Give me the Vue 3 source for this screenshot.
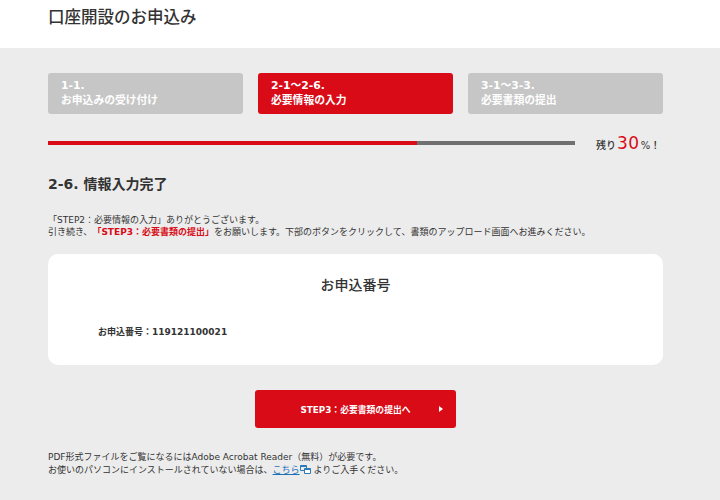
<script setup>
const steps = [
  { no: '1-1.', label: 'お申込みの受け付け', active: false },
  { no: '2-1～2-6.', label: '必要情報の入力', active: true },
  { no: '3-1～3-3.', label: '必要書類の提出', active: false },
]
</script>

<template>
  <div class="page">
    <header class="head">
      <h1>口座開設のお申込み</h1>
    </header>
    <main class="main">
      <ul class="steps">
        <li v-for="s in steps" :key="s.no" class="step" :class="{ active: s.active }">
          <span>{{ s.no }}</span>
          <span>{{ s.label }}</span>
        </li>
      </ul>
      <div class="progress">
        <div class="track"><div class="fill"></div></div>
        <p class="remain">残り<b>30</b>%！</p>
      </div>
      <h2>2-6. 情報入力完了</h2>
      <p class="lead">
        「STEP2：必要情報の入力」ありがとうございます。<br />
        引き続き、<strong>「STEP3：必要書類の提出」</strong>をお願いします。下部のボタンをクリックして、書類のアップロード画面へお進みください。
      </p>
      <section class="card">
        <h3>お申込番号</h3>
        <p class="num">お申込番号：119121100021</p>
      </section>
      <a class="btn">
        <span>STEP3：必要書類の提出へ</span>
        <i class="arrow"></i>
      </a>
      <p class="foot">
        PDF形式ファイルをご覧になるにはAdobe Acrobat Reader（無料）が必要です。<br />
        お使いのパソコンにインストールされていない場合は、<a class="link">こちら</a>
        <svg class="ext" width="11" height="9" viewBox="0 0 11 9">
          <path d="M0.5 0.5h6v5h-6z" fill="none" stroke="#2a7ab8" />
          <path d="M0.5 0.5h6v1.5h-6z" fill="#2a7ab8" />
          <path d="M4.5 3.5h6v5h-6z" fill="#fff" stroke="#2a7ab8" />
          <path d="M4.5 3.5h6v1.5h-6z" fill="#2a7ab8" />
        </svg>
        よりご入手ください。
      </p>
    </main>
  </div>
</template>

<style scoped>
.page {
  width: 720px;
  height: 500px;
  overflow: hidden;
  background: #ececec;
  color: #333;
  font-family: "DejaVu Sans", "Noto Sans CJK JP", sans-serif;
  text-spacing-trim: space-all;
}
.head {
  height: 48px;
  background: #fff;
  padding-left: 48px;
  box-sizing: border-box;
}
h1 {
  margin: 0;
  padding-top: 7px;
  font-size: 16.5px;
  line-height: 22px;
  font-weight: 500;
}
.main {
  padding: 25px 57px 0 48px;
}
.steps {
  display: flex;
  gap: 15px;
  margin: 0;
  padding: 0;
  list-style: none;
}
.step {
  width: 195px;
  height: 41px;
  box-sizing: border-box;
  padding: 5px 12px 0 13px;
  display: flex;
  flex-direction: column;
  background: #c6c6c6;
  border-radius: 3px;
  color: #fff;
  font-size: 10.8px;
  line-height: 15px;
  font-weight: 700;
}
.step.active {
  background: #d90b17;
}
.progress {
  display: flex;
  align-items: center;
  margin-top: 24px;
  height: 12px;
}
.track {
  width: 527px;
  height: 4px;
  margin-top: -2px;
  background: #707070;
}
.fill {
  width: 369px;
  height: 4px;
  background: #d90b17;
}
.remain {
  margin: 0 0 0 21px;
  display: flex;
  align-items: baseline;
  font-size: 10px;
  line-height: 12px;
  font-weight: 500;
  white-space: nowrap;
}
.remain b {
  margin: 0 1px;
  color: #d90b17;
  font-size: 17px;
  font-weight: 400;
  letter-spacing: 0.5px;
}
h2 {
  margin: 24px 0 0;
  font-size: 14px;
  line-height: 20px;
  font-weight: 700;
}
.lead {
  margin: 20px 0 0;
  font-size: 9px;
  line-height: 12px;
  white-space: nowrap;
}
.lead strong {
  color: #d90b17;
}
.card {
  height: 111px;
  margin-top: 16px;
  box-sizing: border-box;
  padding-top: 21px;
  background: #fff;
  border-radius: 10px;
}
h3 {
  margin: 0;
  text-align: center;
  font-size: 14px;
  line-height: 20px;
  font-weight: 500;
}
.num {
  margin: 30px 0 0 50px;
  font-size: 9px;
  line-height: 14px;
  font-weight: 700;
}
.btn {
  position: relative;
  display: flex;
  align-items: center;
  justify-content: center;
  width: 201px;
  height: 38px;
  margin: 25px 0 0 207px;
  box-sizing: border-box;
  background: #d90b17;
  border-radius: 3px;
  color: #fff;
  font-size: 8.8px;
  font-weight: 700;
}
.arrow {
  position: absolute;
  right: 13px;
  top: 16px;
  width: 0;
  height: 0;
  border-left: 4px solid #fff;
  border-top: 3.5px solid transparent;
  border-bottom: 3.5px solid transparent;
}
.foot {
  margin: 23px 0 0;
  font-size: 9px;
  line-height: 13px;
  white-space: nowrap;
}
.link {
  color: #1a6fb5;
  text-decoration: underline;
}
.ext {
  vertical-align: -1px;
}
</style>
